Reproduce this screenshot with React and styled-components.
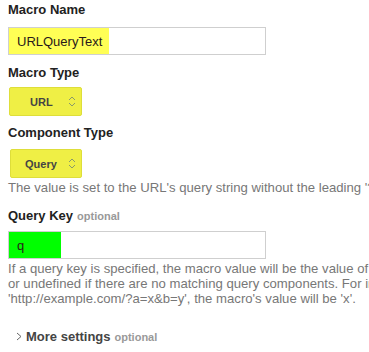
import React from "react";
import styled, { createGlobalStyle } from "styled-components";

const Global = createGlobalStyle`
  html, body { margin: 0; padding: 0; overflow: hidden; background: #fff; }
  body { font-family: "Liberation Sans", Arial, sans-serif; }
`;

const Page = styled.div`
  padding: 2px 0 0 8px;
  width: 700px;
`;

const Label = styled.div`
  font-size: 13px;
  line-height: 16px;
  font-weight: bold;
  color: #222;
  margin-top: ${(p) => p.$mt || 0}px;
`;

const Optional = styled.span`
  font-size: 11px;
  color: #999;
  font-weight: bold;
  margin-left: 4px;
`;

const InputBox = styled.div`
  margin-top: ${(p) => p.$mt || 0}px;
  width: 256px;
  height: 26px;
  border: 1px solid #cfcfcf;
  display: flex;
  box-sizing: content-box;
`;

const Highlight = styled.span`
  background: ${(p) => p.$bg};
  display: flex;
  align-items: center;
  padding: 0 ${(p) => p.$pr}px 0 8px;
  font-size: 13px;
  color: #2a1a1a;
  height: 100%;
`;

const Select = styled.div`
  margin-top: ${(p) => p.$mt || 0}px;
  margin-left: ${(p) => p.$ml || 1}px;
  width: ${(p) => p.$w}px;
  height: 29px;
  box-sizing: border-box;
  background: #efef45;
  border: 1px solid #dede3a;
  border-radius: 2px;
  display: flex;
  align-items: center;
  position: relative;
  font-size: 11px;
  font-weight: bold;
  color: #444;
  padding-left: ${(p) => p.$pl}px;
`;

const Arrows = styled.svg`
  position: absolute;
  right: 5px;
  top: 8px;
`;

const Help = styled.div`
  font-size: 13.15px;
  line-height: 15px;
  color: #777;
  white-space: nowrap;
  margin-top: ${(p) => p.$mt || 0}px;
`;

const More = styled.div`
  margin-top: 23px;
  margin-left: 8px;
  display: flex;
  align-items: baseline;
  font-size: 13px;
  font-weight: bold;
  color: #444;
`;

const Chevron = styled.svg`
  margin-right: 4px;
  align-self: center;
`;

function SelectArrows() {
  return (
    <Arrows width="8" height="11" viewBox="0 0 8 11">
      <path d="M1 4 L4 1 L7 4" fill="none" stroke="#8a9a6a" strokeWidth="1" />
      <path d="M1 7 L4 10 L7 7" fill="none" stroke="#8a9a6a" strokeWidth="1" />
    </Arrows>
  );
}

export default function App() {
  return (
    <>
      <Global />
      <Page>
        <Label>Macro Name</Label>
        <InputBox $mt={9}>
          <Highlight $bg="#ffff55" $pr={7}>URLQueryText</Highlight>
        </InputBox>
        <Label $mt={10}>Macro Type</Label>
        <Select $mt={6} $w={73} $pl={20}>
          URL
          <SelectArrows />
        </Select>
        <Label $mt={9}>Component Type</Label>
        <Select $mt={8} $ml={2} $w={72} $pl={14}>
          Query
          <SelectArrows />
        </Select>
        <Help $mt={2}>The value is set to the URL's query string without the leading '?'.</Help>
        <Label $mt={13}>Query Key<Optional>optional</Optional></Label>
        <InputBox $mt={7}>
          <Highlight $bg="#00ff00" $pr={37}>q</Highlight>
        </InputBox>
        <Help $mt={2}>
          If a query key is specified, the macro value will be the value of the first matching query component,
          <br />
          or undefined if there are no matching query components. For instance, if the URL is
          <br />
          'http://example.com/?a=x&amp;b=y', the macro's value will be 'x'.
        </Help>
        <More>
          <Chevron width="6" height="9" viewBox="0 0 6 9">
            <path d="M1 1 L5 4.5 L1 8" fill="none" stroke="#666" strokeWidth="1" />
          </Chevron>
          More settings<Optional>optional</Optional>
        </More>
      </Page>
    </>
  );
}
